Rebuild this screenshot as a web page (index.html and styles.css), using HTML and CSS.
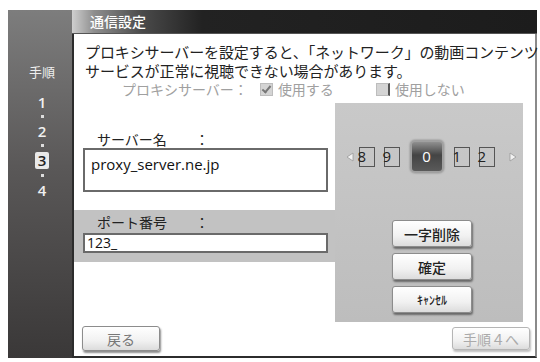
FILE: index.html
```html
<!DOCTYPE html>
<html lang="ja">
<head>
  <meta charset="UTF-8" />
  <title>通信設定</title>
  <link rel="stylesheet" href="styles.css">
</head>
<body>

  <div class="screen">
    <div class="sidebar">
      <div class="steps-title">手順</div>
      <div class="step">1</div>
      <div class="dot"></div>
      <div class="step">2</div>
      <div class="dot"></div>
      <div class="step current">3</div>
      <div class="dot"></div>
      <div class="step">4</div>
    </div>

    <div class="main">
      <div class="titlebar">通信設定</div>

      <div class="content">
        <div class="intro">
          <p class="line">プロキシサーバーを設定すると、「ネットワーク」の動画コンテンツ</p>
          <p class="line">サービスが正常に視聴できない場合があります。</p>
          <p class="line option-line">
            <span class="option-label">プロキシサーバー：</span>
            <span class="check checked"></span><span class="option">使用する</span>
            <span class="check unchecked"></span><span class="option">使用しない</span>
          </p>
        </div>

        <div class="middle">
          <div class="form-col">
            <div class="server">
              <div class="field-label">サーバー名<span class="colon">：</span></div>
              <div class="text-box big">proxy_server.ne.jp</div>
            </div>
            <div class="port">
              <div class="field-label">ポート番号<span class="colon">：</span></div>
              <div class="text-box small">123_</div>
            </div>
          </div>

          <div class="panel">
            <div class="digits">
              <svg class="arrow" width="8" height="10" viewBox="0 0 8 10"><polygon points="7,1 1,5 7,9" fill="#f2f2f2" stroke="#999" stroke-width="0.8"/></svg>
              <span class="digit">8</span>
              <span class="digit">9</span>
              <span class="digit selected">0</span>
              <span class="digit">1</span>
              <span class="digit">2</span>
              <svg class="arrow" width="8" height="10" viewBox="0 0 8 10"><polygon points="1,1 7,5 1,9" fill="#f2f2f2" stroke="#999" stroke-width="0.8"/></svg>
            </div>
            <div class="panel-buttons">
              <button class="btn">一字削除</button>
              <button class="btn">確定</button>
              <button class="btn narrow-text">ｷｬﾝｾﾙ</button>
            </div>
          </div>
        </div>

        <div class="bottom">
          <button class="btn nav-btn back">戻る</button>
          <button class="btn nav-btn next">手順４へ</button>
        </div>
      </div>
    </div>
  </div>

</body>
</html>
```

FILE: styles.css
```css
body {
  margin: 0;
  padding: 0;
  background: #fff;
  font-family: "Noto Sans CJK JP", "Noto Sans", sans-serif;
}

.screen {
  display: flex;
  width: 529px;
  height: 348px;
  margin: 10px 0 0 8px;
}

.sidebar {
  width: 64px;
  flex-shrink: 0;
  display: flex;
  flex-direction: column;
  align-items: center;
  padding-top: 54px;
  box-sizing: border-box;
  background: linear-gradient(#7d7d7d, #5a5858 45%, #3a3838);
  color: #eee;
}

.steps-title {
  font-size: 13px;
  line-height: 16px;
  margin-bottom: 14px;
  padding-left: 4px;
}

.step {
  font-family: "Open Sans", "Noto Sans", sans-serif;
  font-size: 15px;
  font-weight: 600;
  line-height: 16px;
  height: 16px;
  padding-left: 4px;
  color: #f0f0f0;
}

.step.current {
  background: #e9e9e9;
  color: #222;
  padding: 0 3px;
  margin-left: 4px;
  border-radius: 2px;
  height: 17px;
}

.dot {
  height: 13px;
  margin-left: 4px;
  display: flex;
  align-items: center;
}

.dot::before {
  content: "";
  width: 3px;
  height: 3px;
  background: #ddd;
}

.main {
  flex: 1;
  min-width: 0;
  display: flex;
  flex-direction: column;
}

.titlebar {
  height: 23px;
  line-height: 23px;
  padding-left: 18px;
  font-size: 14px;
  font-weight: 500;
  color: #fff;
  background: linear-gradient(to right, #cfcfcf 0, #8e8e8e 22px, #4a4a4a 70px, #222 130px, #1c1c1c);
  border-bottom: 1px solid #555;
}

.content {
  flex: 1;
  display: flex;
  flex-direction: column;
  background: #fff;
  border-left: 2px solid #2c2c2c;
  border-right: 2px solid #8a8a8a;
  border-bottom: 2px solid #2c2c2c;
  padding-top: 8px;
  padding-bottom: 4px;
}

.intro {
  padding-left: 11px;
  white-space: nowrap;
}

.line {
  margin: 0;
  font-size: 15px;
  line-height: 19px;
  letter-spacing: -0.1px;
  color: #222;
}

.option-line {
  font-size: 14px;
  line-height: 16px;
  letter-spacing: 0;
  margin-top: 1px;
  color: #a0a0a0;
  display: flex;
  align-items: center;
  padding-left: 37px;
}

.option-label {
  margin-right: 12px;
}

.check {
  display: inline-block;
  width: 11px;
  height: 11px;
  margin-right: 5px;
  background: #d4d4d4;
  border: 1px solid #bdbdbd;
  position: relative;
}

.check.checked::after {
  content: "";
  position: absolute;
  left: 3px;
  top: 0;
  width: 3px;
  height: 7px;
  border: solid #777;
  border-width: 0 2px 2px 0;
  transform: rotate(40deg);
}

.check.unchecked {
  margin-left: 42px;
  border-right: 2px solid #555;
}

.middle {
  display: flex;
  margin-top: 6px;
  height: 219px;
}

.form-col {
  width: 261px;
  display: flex;
  flex-direction: column;
}

.server {
  padding: 28px 0 18px 9px;
}

.field-label {
  font-size: 14px;
  line-height: 16px;
  color: #222;
  padding-left: 14px;
}

.colon {
  display: inline-block;
  margin-left: 28px;
}

.text-box {
  box-sizing: border-box;
  width: 245px;
  margin-top: 1px;
  background: #fff;
  border: 2px solid #6a6a6a;
  color: #111;
  font-family: "Open Sans", "Noto Sans", sans-serif;
  padding-left: 6px;
}

.text-box.big {
  height: 44px;
  font-size: 15px;
  line-height: 29px;
}

.text-box.small {
  height: 20px;
  font-size: 14px;
  line-height: 16px;
  padding-left: 2px;
  margin-top: 3px;
}

.port {
  height: 52px;
  box-sizing: border-box;
  padding: 4px 0 0 9px;
  background: #c2c2c2;
}

.panel {
  width: 188px;
  display: flex;
  flex-direction: column;
  align-items: center;
  background: linear-gradient(#c9c9c9, #bdbdbd);
}

.digits {
  display: flex;
  align-items: center;
  margin-top: 37px;
  height: 33px;
  padding-left: 4px;
}

.arrow {
  margin: 0 5px;
}

.digit {
  box-sizing: border-box;
  width: 16px;
  height: 20px;
  margin-right: 9px;
  border: 1.5px solid #555;
  font-family: "Open Sans", "Noto Sans", sans-serif;
  font-size: 15px;
  line-height: 17px;
  color: #222;
  text-indent: -2px;
}

.digit.selected {
  width: 34px;
  height: 33px;
  margin: 0 10px 0 1px;
  border: 2px solid #a0a0a0;
  border-radius: 5px;
  background: linear-gradient(#909090, #444 45%, #5a5a5a);
  box-shadow: 0 0 2px #777;
  color: #fff;
  text-align: center;
  line-height: 29px;
  text-indent: 0;
}

.panel-buttons {
  display: flex;
  flex-direction: column;
  gap: 6px;
  margin-top: 47px;
  margin-left: 6px;
}

.btn {
  width: 80px;
  height: 27px;
  padding: 0;
  font-family: "Noto Sans CJK JP", sans-serif;
  font-size: 14px;
  font-weight: 500;
  color: #222;
  background: linear-gradient(#ffffff, #f1f1f1 60%, #dcdcdc);
  border: 1px solid #8c8c8c;
  border-radius: 3px;
  box-shadow: 1px 2px 2px rgba(0, 0, 0, 0.45);
}

.narrow-text {
  font-size: 12px;
}

.bottom {
  display: flex;
  justify-content: space-between;
  align-items: flex-start;
  margin-top: 4px;
  padding: 0 5px 0 8px;
}

.nav-btn {
  width: 78px;
  height: 25px;
  font-weight: 400;
}

.back {
  color: #777;
}

.next {
  margin-top: 1px;
  height: 23px;
  color: #aaa;
  border-color: #b5b5b5;
  box-shadow: 1px 2px 2px rgba(0, 0, 0, 0.25);
}
```
